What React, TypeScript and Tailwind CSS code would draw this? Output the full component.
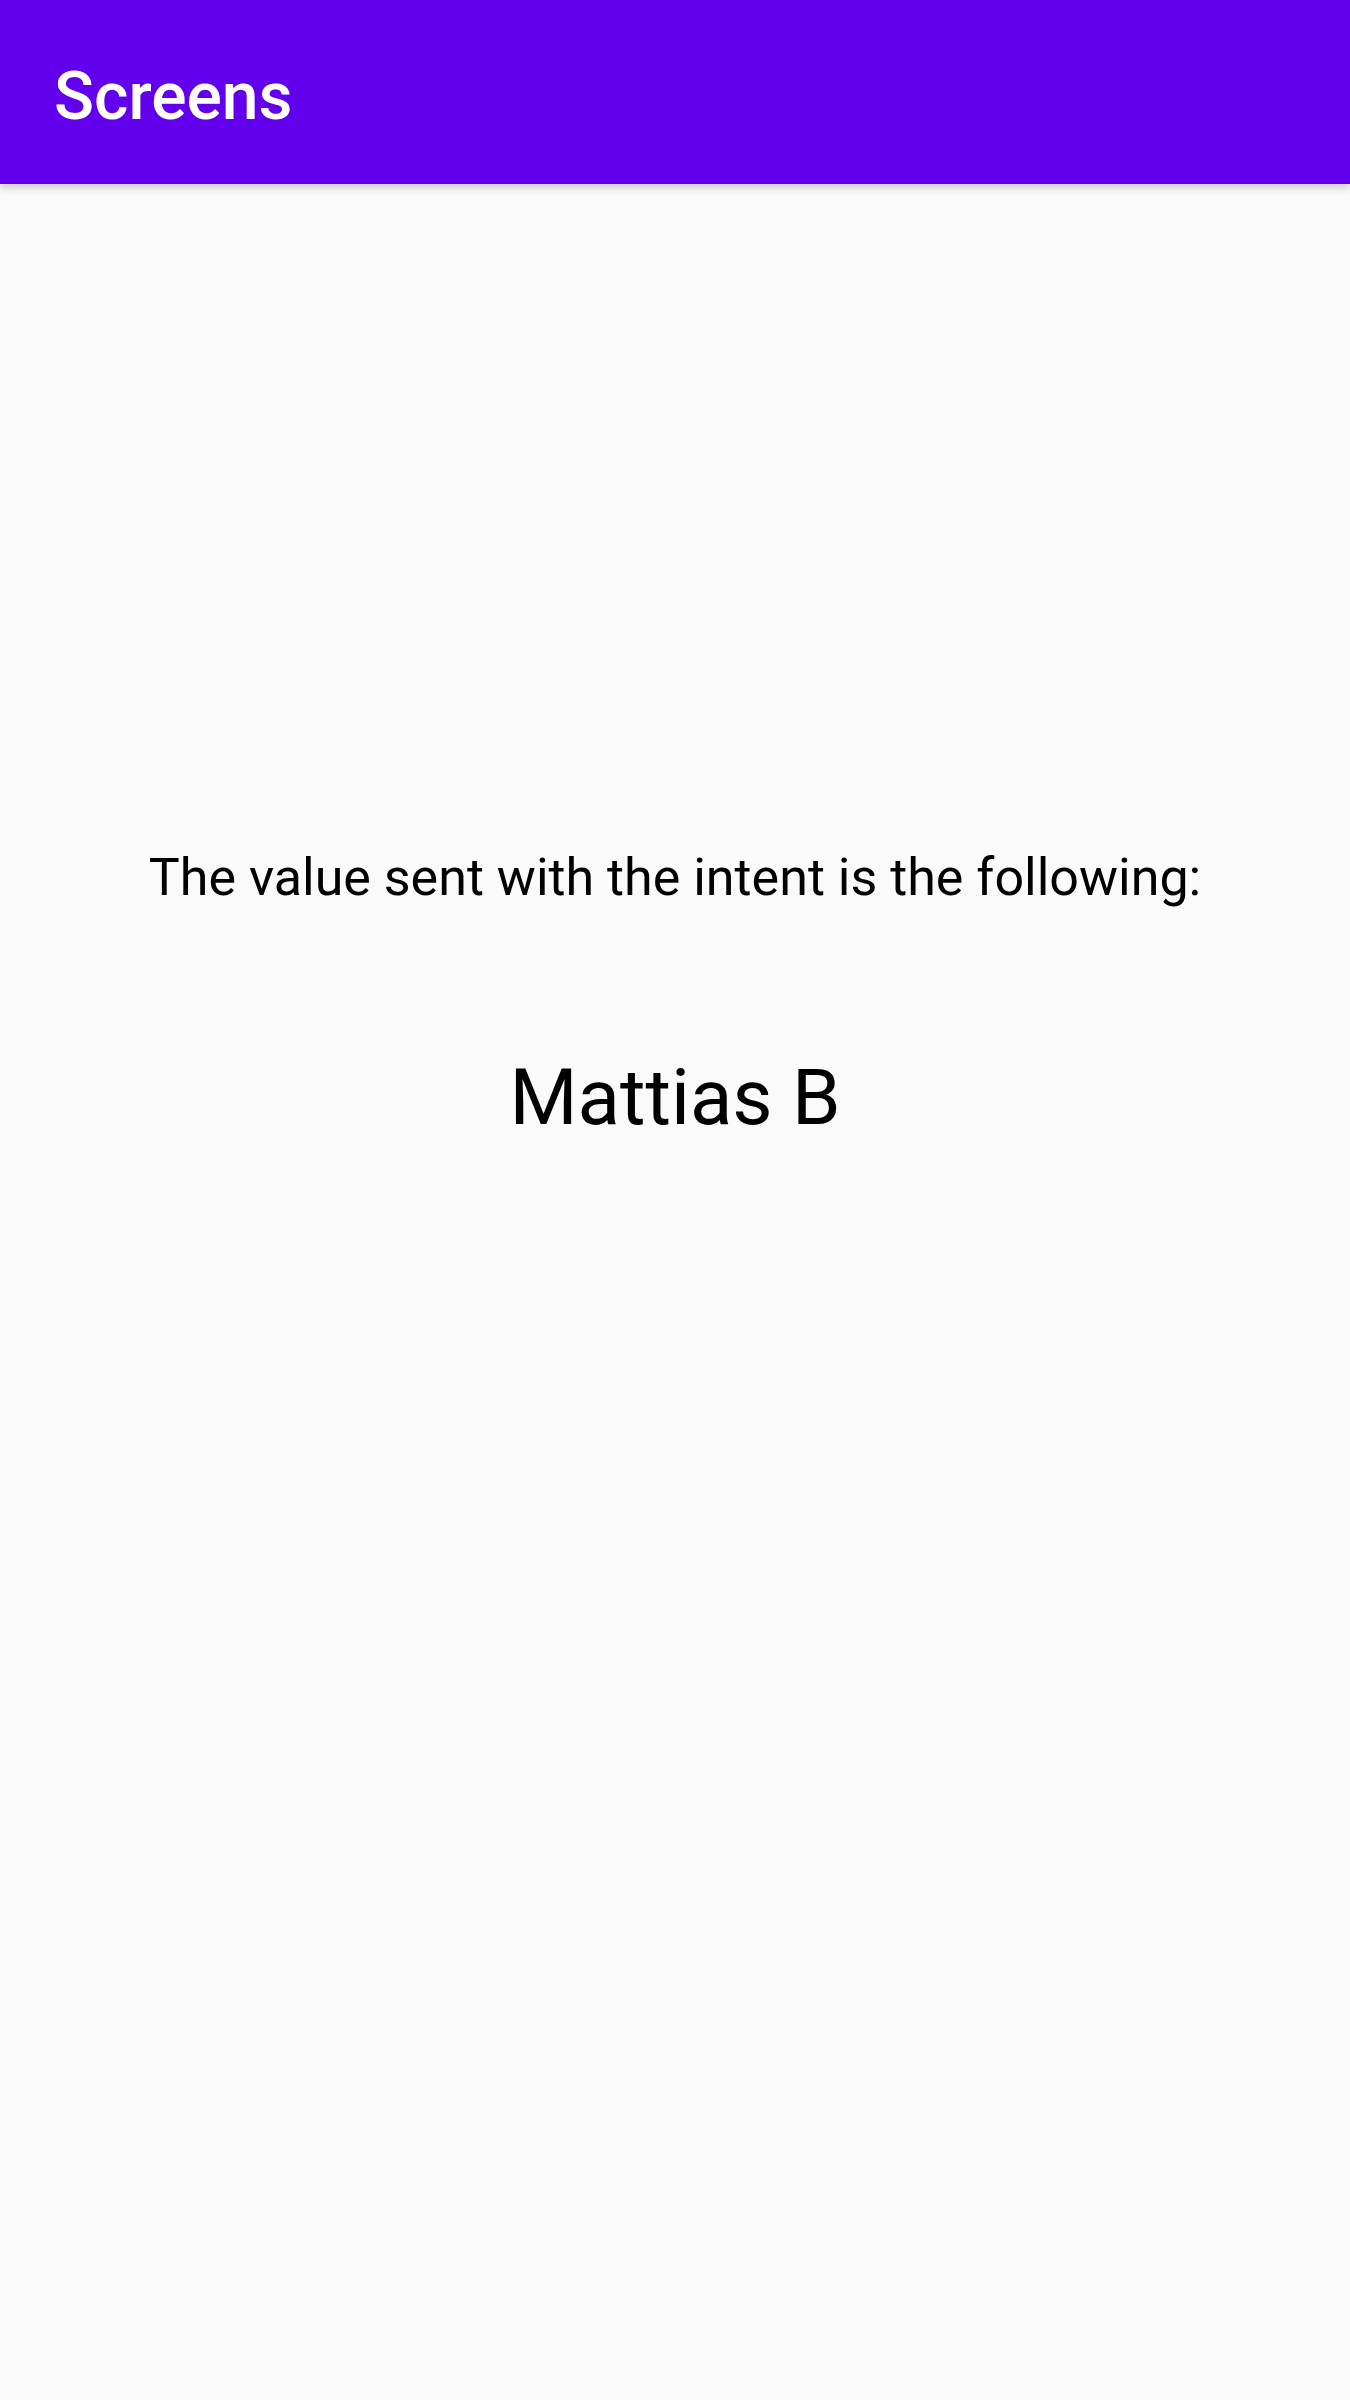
export default function App() {
  return (
    <div className="min-h-screen w-full bg-[#fafafa]" style={{ fontFamily: "Roboto, 'Noto Sans', sans-serif" }}>
      <header className="relative z-10 flex h-[184px] items-center bg-[#6200ee] px-[54px] pt-[10px] shadow-[0_4px_8px_rgba(0,0,0,0.18)]">
        <h1 className="text-[66px] font-medium leading-none text-white">Screens</h1>
      </header>
      <main className="flex flex-col items-center pt-[663px] text-black">
        <p className="text-[52px] leading-[62px]">The value sent with the intent is the following:</p>
        <p className="mt-[143px] text-[78px] leading-[92px]">Mattias B</p>
      </main>
    </div>
  );
}
